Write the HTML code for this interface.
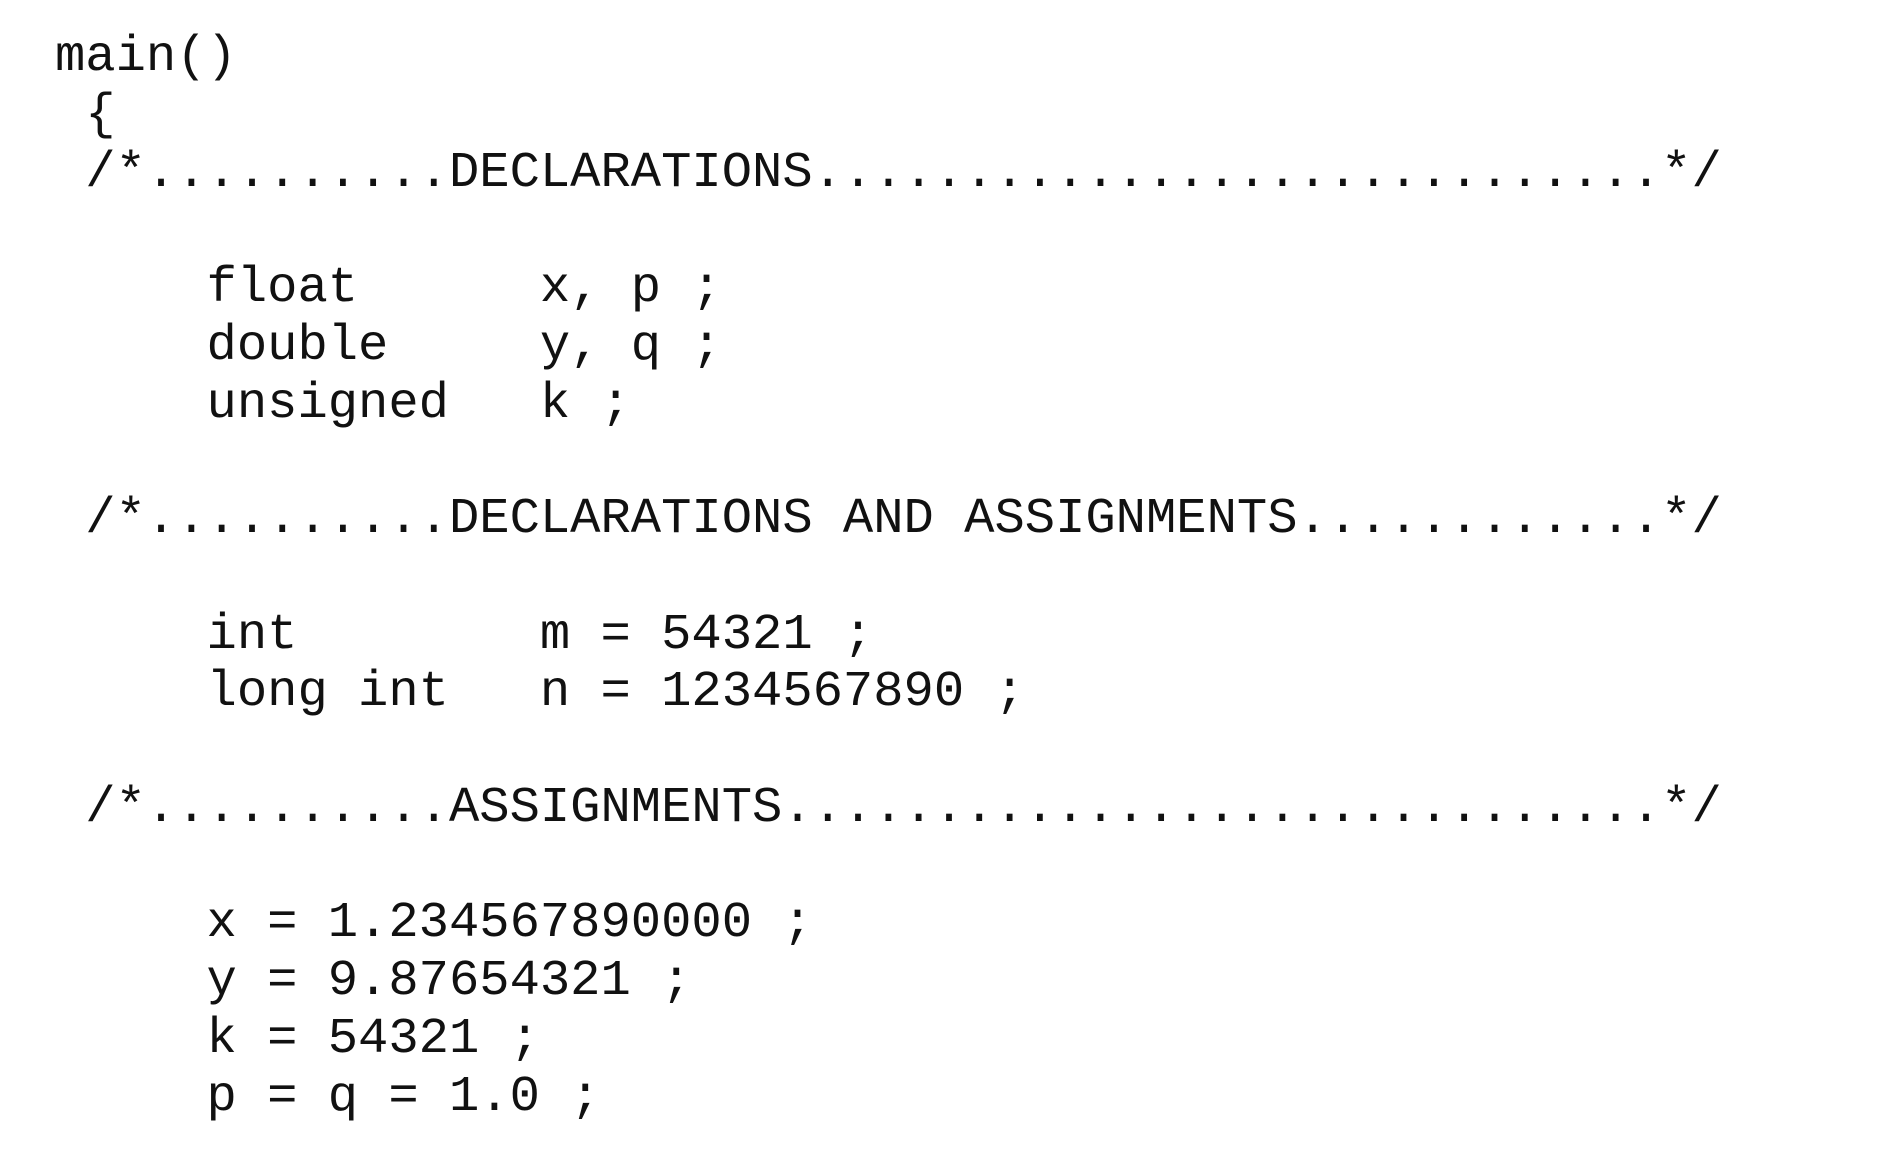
<!DOCTYPE html>
<html><head><meta charset="utf-8"><style>
html,body{margin:0;padding:0;background:#fff;width:1896px;height:1158px;overflow:hidden}
pre{margin:0;padding:29px 0 0 55px;font-family:"Liberation Mono",monospace;font-size:50.5px;line-height:57.75px;color:#111;}
</style></head><body><pre>main()
 {
 /*..........DECLARATIONS............................*/

     float      x, p ;
     double     y, q ;
     unsigned   k ;

 /*..........DECLARATIONS AND ASSIGNMENTS............*/

     int        m = 54321 ;
     long int   n = 1234567890 ;

 /*..........ASSIGNMENTS.............................*/

     x = 1.234567890000 ;
     y = 9.87654321 ;
     k = 54321 ;
     p = q = 1.0 ;</pre></body></html>
